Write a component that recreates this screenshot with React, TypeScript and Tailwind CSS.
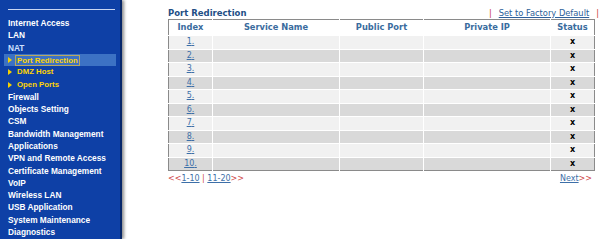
const menu: { label: string; kind?: 'sub' | 'active' | 'nat' }[] = [
  { label: 'Internet Access' },
  { label: 'LAN' },
  { label: 'NAT', kind: 'nat' },
  { label: 'Port Redirection', kind: 'active' },
  { label: 'DMZ Host', kind: 'sub' },
  { label: 'Open Ports', kind: 'sub' },
  { label: 'Firewall' },
  { label: 'Objects Setting' },
  { label: 'CSM' },
  { label: 'Bandwidth Management' },
  { label: 'Applications' },
  { label: 'VPN and Remote Access' },
  { label: 'Certificate Management' },
  { label: 'VoIP' },
  { label: 'Wireless LAN' },
  { label: 'USB Application' },
  { label: 'System Maintenance' },
  { label: 'Diagnostics' },
];

const rows = Array.from({ length: 10 }, (_, i) => i + 1);

function Arrow() {
  return (
    <svg width="4" height="6" viewBox="0 0 4 6" className="mr-[3px] shrink-0">
      <path d="M0 0 L4 3 L0 6 Z" fill="#f5d000" />
    </svg>
  );
}

export default function App() {
  return (
    <div className="flex h-[239px] w-[609px] overflow-hidden bg-white">
      {/* Sidebar */}
      <aside className="relative h-full w-[122px] shrink-0 border-r-2 border-[#08286a] bg-[#0e40a6] shadow-[2px_0_3px_rgba(0,0,0,0.45)] font-['Liberation_Sans',Arial,sans-serif]">
        <div className="mx-[8px] mt-[9px] h-[1px] w-[107px] bg-[#c9d6f2]" />
        <ul className="mt-[7px]">
          {menu.map((m) => {
            if (m.kind === 'active') {
              return (
                <li key={m.label} className="mx-[4px] flex h-[12.3px] items-center bg-[#3c72c4] pl-[4px] text-[7.8px] font-bold text-[#ffd400]">
                  <Arrow />
                  <span className="border border-[#b8a860] px-[1px] leading-[9px]">{m.label}</span>
                </li>
              );
            }
            if (m.kind === 'sub') {
              return (
                <li key={m.label} className="flex h-[12.3px] items-center pl-[8px] text-[7.8px] font-bold text-[#ffd400]">
                  <Arrow />
                  <span className="pl-[2px]">{m.label}</span>
                </li>
              );
            }
            return (
              <li
                key={m.label}
                className={`flex h-[12.3px] items-center pl-[8px] text-[8.3px] font-bold ${m.kind === 'nat' ? 'text-[#cfe0ff]' : 'text-white'}`}
              >
                {m.label}
              </li>
            );
          })}
        </ul>
      </aside>

      {/* Content */}
      <main className="ml-[46px] w-[426px] font-['DejaVu_Sans',Verdana,sans-serif]">
        <div className="-mr-[5px] flex h-[19px] items-end justify-between pb-[2px]">
          <span className="text-[8.5px] font-bold leading-none text-[#1f4f86]">Port Redirection</span>
          <span className="flex items-center gap-[7px] text-[8.3px] leading-none">
            <span className="text-[#c83a3a]">|</span>
            <span className="text-[#2d5f9a] underline">Set to Factory Default</span>
            <span className="text-[#c83a3a]">|</span>
          </span>
        </div>

        <table className="w-[426px] table-fixed border-collapse border border-[#8a8a8a] text-[8px]">
          <colgroup>
            <col className="w-[44px]" />
            <col className="w-[127px]" />
            <col className="w-[84px]" />
            <col className="w-[127px]" />
            <col className="w-[44px]" />
          </colgroup>
          <thead>
            <tr className="h-[16px] bg-white text-[8.3px] font-bold text-[#3a6c9e]">
              <th className="border-r border-white">Index</th>
              <th className="border-r border-white">Service Name</th>
              <th className="border-r border-white">Public Port</th>
              <th className="border-r border-white">Private IP</th>
              <th>Status</th>
            </tr>
          </thead>
          <tbody>
            {rows.map((n) => (
              <tr key={n} className={`h-[13.5px] ${n % 2 === 1 ? 'bg-[#f1f1f1]' : 'bg-[#d9d9d9]'}`}>
                <td className="border-r border-t border-white p-0 text-center text-[#3d6fa8] underline">{n}.</td>
                <td className="border-r border-t border-white p-0" />
                <td className="border-r border-t border-white p-0" />
                <td className="border-r border-t border-white p-0" />
                <td className="border-t border-white p-0 text-center font-bold text-black">x</td>
              </tr>
            ))}
          </tbody>
        </table>

        <div className="mt-[4px] flex justify-between text-[8px] leading-none">
          <span>
            <span className="text-[#d04848]">&lt;&lt;</span>
            <span className="text-[#3d6fa8] underline">1-10</span>
            <span className="text-[#d04848]"> | </span>
            <span className="text-[#3d6fa8] underline">11-20</span>
            <span className="text-[#d04848]">&gt;&gt;</span>
          </span>
          <span className="pr-[2px]">
            <span className="text-[#3d6fa8] underline">Next</span>
            <span className="text-[#d04848]">&gt;&gt;</span>
          </span>
        </div>
      </main>
    </div>
  );
}
